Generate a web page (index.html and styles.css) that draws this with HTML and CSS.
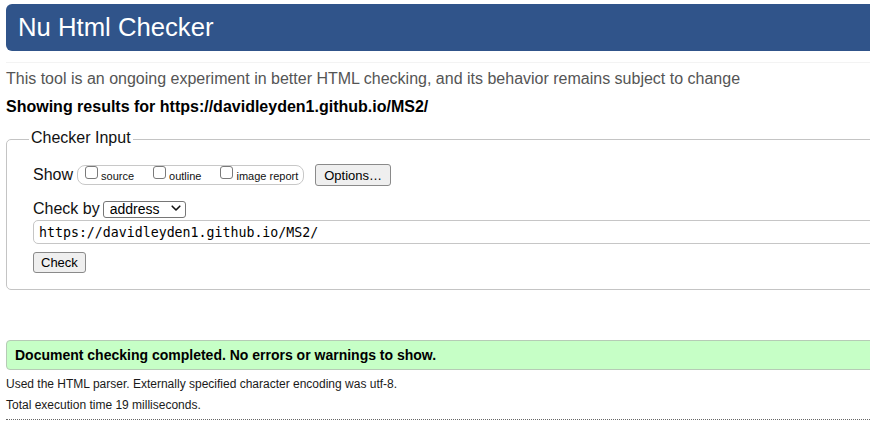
FILE: index.html
```html
<!DOCTYPE html>
<html lang="en">
<head>
<meta charset="utf-8">
<title>Nu Html Checker</title>
<link rel="stylesheet" href="styles.css">
</head>
<body>
<div class="page">
  <h1 class="banner">Nu Html Checker</h1>
  <div class="rule"></div>
  <p class="intro">This tool is an ongoing experiment in better HTML checking, and its behavior remains subject to change</p>
  <p class="showing">Showing results for https://davidleyden1.github.io/MS2/</p>
  <form class="checker">
    <fieldset class="input-set">
      <legend>Checker Input</legend>
      <div class="row row-show">
        <span class="label">Show</span>
        <span class="opts">
          <label class="opt"><input type="checkbox" class="cb"><span>source</span></label>
          <label class="opt"><input type="checkbox" class="cb"><span>outline</span></label>
          <label class="opt last"><input type="checkbox" class="cb"><span>image report</span></label>
        </span>
        <button type="button" class="btn btn-options">Options…</button>
      </div>
      <div class="row row-by">
        <span class="label label-by">Check by</span>
        <span class="select-wrap">
          <select class="sel"><option>address</option></select>
          <svg class="chev" width="10" height="7" viewBox="0 0 10 7"><path d="M1.2 1.2 L5 5 L8.8 1.2" fill="none" stroke="#111" stroke-width="1.6" stroke-linecap="round" stroke-linejoin="round"/></svg>
        </span>
      </div>
      <div class="row row-url">
        <input class="url" type="text" value="https://davidleyden1.github.io/MS2/">
      </div>
      <div class="row row-check">
        <button type="button" class="btn btn-check">Check</button>
      </div>
    </fieldset>
  </form>
  <p class="success">Document checking completed. No errors or warnings to show.</p>
  <p class="details first">Used the HTML parser. Externally specified character encoding was utf-8.</p>
  <p class="details">Total execution time 19 milliseconds.</p>
  <div class="dotted"></div>
</div>
</body>
</html>
```
FILE: styles.css
```css
html, body {
  margin: 0;
  padding: 0;
  overflow: hidden;
  background: #fff;
}
body {
  font-family: "Liberation Sans", Arial, sans-serif;
  color: #000;
}
.page {
  width: 900px;
  margin-left: 6px;
  padding-top: 4px;
}
.banner {
  margin: 0;
  height: 47px;
  box-sizing: border-box;
  line-height: 46px;
  padding-left: 12px;
  font-size: 25.7px;
  font-weight: normal;
  color: #fff;
  background: #30548a;
  border-radius: 6px 0 0 6px;
}
.rule {
  height: 1px;
  background: #f3f3f3;
  margin-top: 11px;
}
.intro {
  margin: 6px 0 0;
  font-size: 16px;
  line-height: 20px;
  color: #555;
}
.showing {
  margin: 8px 0 0;
  font-size: 16px;
  line-height: 20px;
  font-weight: bold;
}
.checker {
  margin: 0;
}
.input-set {
  margin: 11px 0 0;
  padding: 0 0 16px 26px;
  border: 1px solid #c4c4c4;
  border-radius: 5px;
  min-inline-size: 0;
}
.input-set legend {
  font-size: 16px;
  line-height: 20px;
  padding: 0 2px 3px;
  margin-left: -4px;
  color: #111;
}
.row {
  display: flex;
  align-items: flex-start;
}
.label {
  font-size: 16px;
  color: #111;
}
.row-show {
  margin-top: 13px;
  height: 22px;
}
.row-show .label {
  line-height: 21px;
  margin-right: 4px;
}
.opts {
  display: flex;
  align-items: flex-start;
  margin-top: 1px;
  height: 20px;
  box-sizing: border-box;
  border: 1px solid #c8c8c8;
  border-radius: 8px;
  padding: 0 5px 0 7px;
  font-size: 11px;
  color: #111;
}
.opt {
  display: flex;
  align-items: flex-start;
  margin-right: 19px;
}
.opt.last {
  margin-right: 0;
}
.opt span {
  line-height: 18px;
  padding-top: 1px;
}
.cb {
  -webkit-appearance: none;
  appearance: none;
  width: 13px;
  height: 13px;
  margin: 0 3px 0 0;
  border: 1px solid #7a7a7a;
  border-radius: 3px;
  background: #fff;
}
.btn {
  font-family: "Liberation Sans", Arial, sans-serif;
  font-size: 13px;
  color: #000;
  background: #efefef;
  border: 1px solid #8a8a8a;
  border-radius: 3px;
  padding: 0 7px;
  margin: 0;
}
.btn-options {
  height: 22px;
  margin-left: 11px;
  padding: 0 8px;
}
.row-by {
  margin-top: 14px;
  height: 17px;
}
.label-by {
  line-height: 17px;
  margin-right: 3px;
}
.select-wrap {
  position: relative;
  display: block;
}
.sel {
  -webkit-appearance: none;
  appearance: none;
  width: 83px;
  height: 17px;
  box-sizing: border-box;
  margin: 0;
  padding: 0 0 0 6px;
  border: 1px solid #767676;
  border-radius: 3px;
  background: #fff;
  font-family: "Liberation Sans", Arial, sans-serif;
  font-size: 14px;
  line-height: 15px;
  color: #000;
}
.chev {
  position: absolute;
  right: 5px;
  top: 5px;
  pointer-events: none;
}
.row-url {
  margin-top: 3px;
}
.url {
  flex: 1;
  height: 24px;
  box-sizing: border-box;
  margin: 0;
  padding: 0 5px;
  border: 1px solid #c6c6c6;
  border-radius: 5px 0 0 5px;
  font-family: "DejaVu Sans Mono", "Liberation Mono", monospace;
  font-size: 13.25px;
  color: #000;
  background: #fff;
}
.row-check {
  margin-top: 8px;
}
.btn-check {
  height: 21px;
}
.success {
  margin: 50px 0 0;
  padding: 5px 8px;
  border: 1px solid #b6cbb6;
  border-radius: 4px 0 0 4px;
  background: #c6ffc6;
  font-size: 14px;
  line-height: 18px;
  font-weight: bold;
  color: #000;
}
.details {
  margin: 0;
  font-size: 12px;
  line-height: 21px;
  color: #1a1a1a;
}
.details.first {
  margin-top: 4px;
}
.dotted {
  margin-top: 3px;
  border-top: 1px dotted #666;
}
```
